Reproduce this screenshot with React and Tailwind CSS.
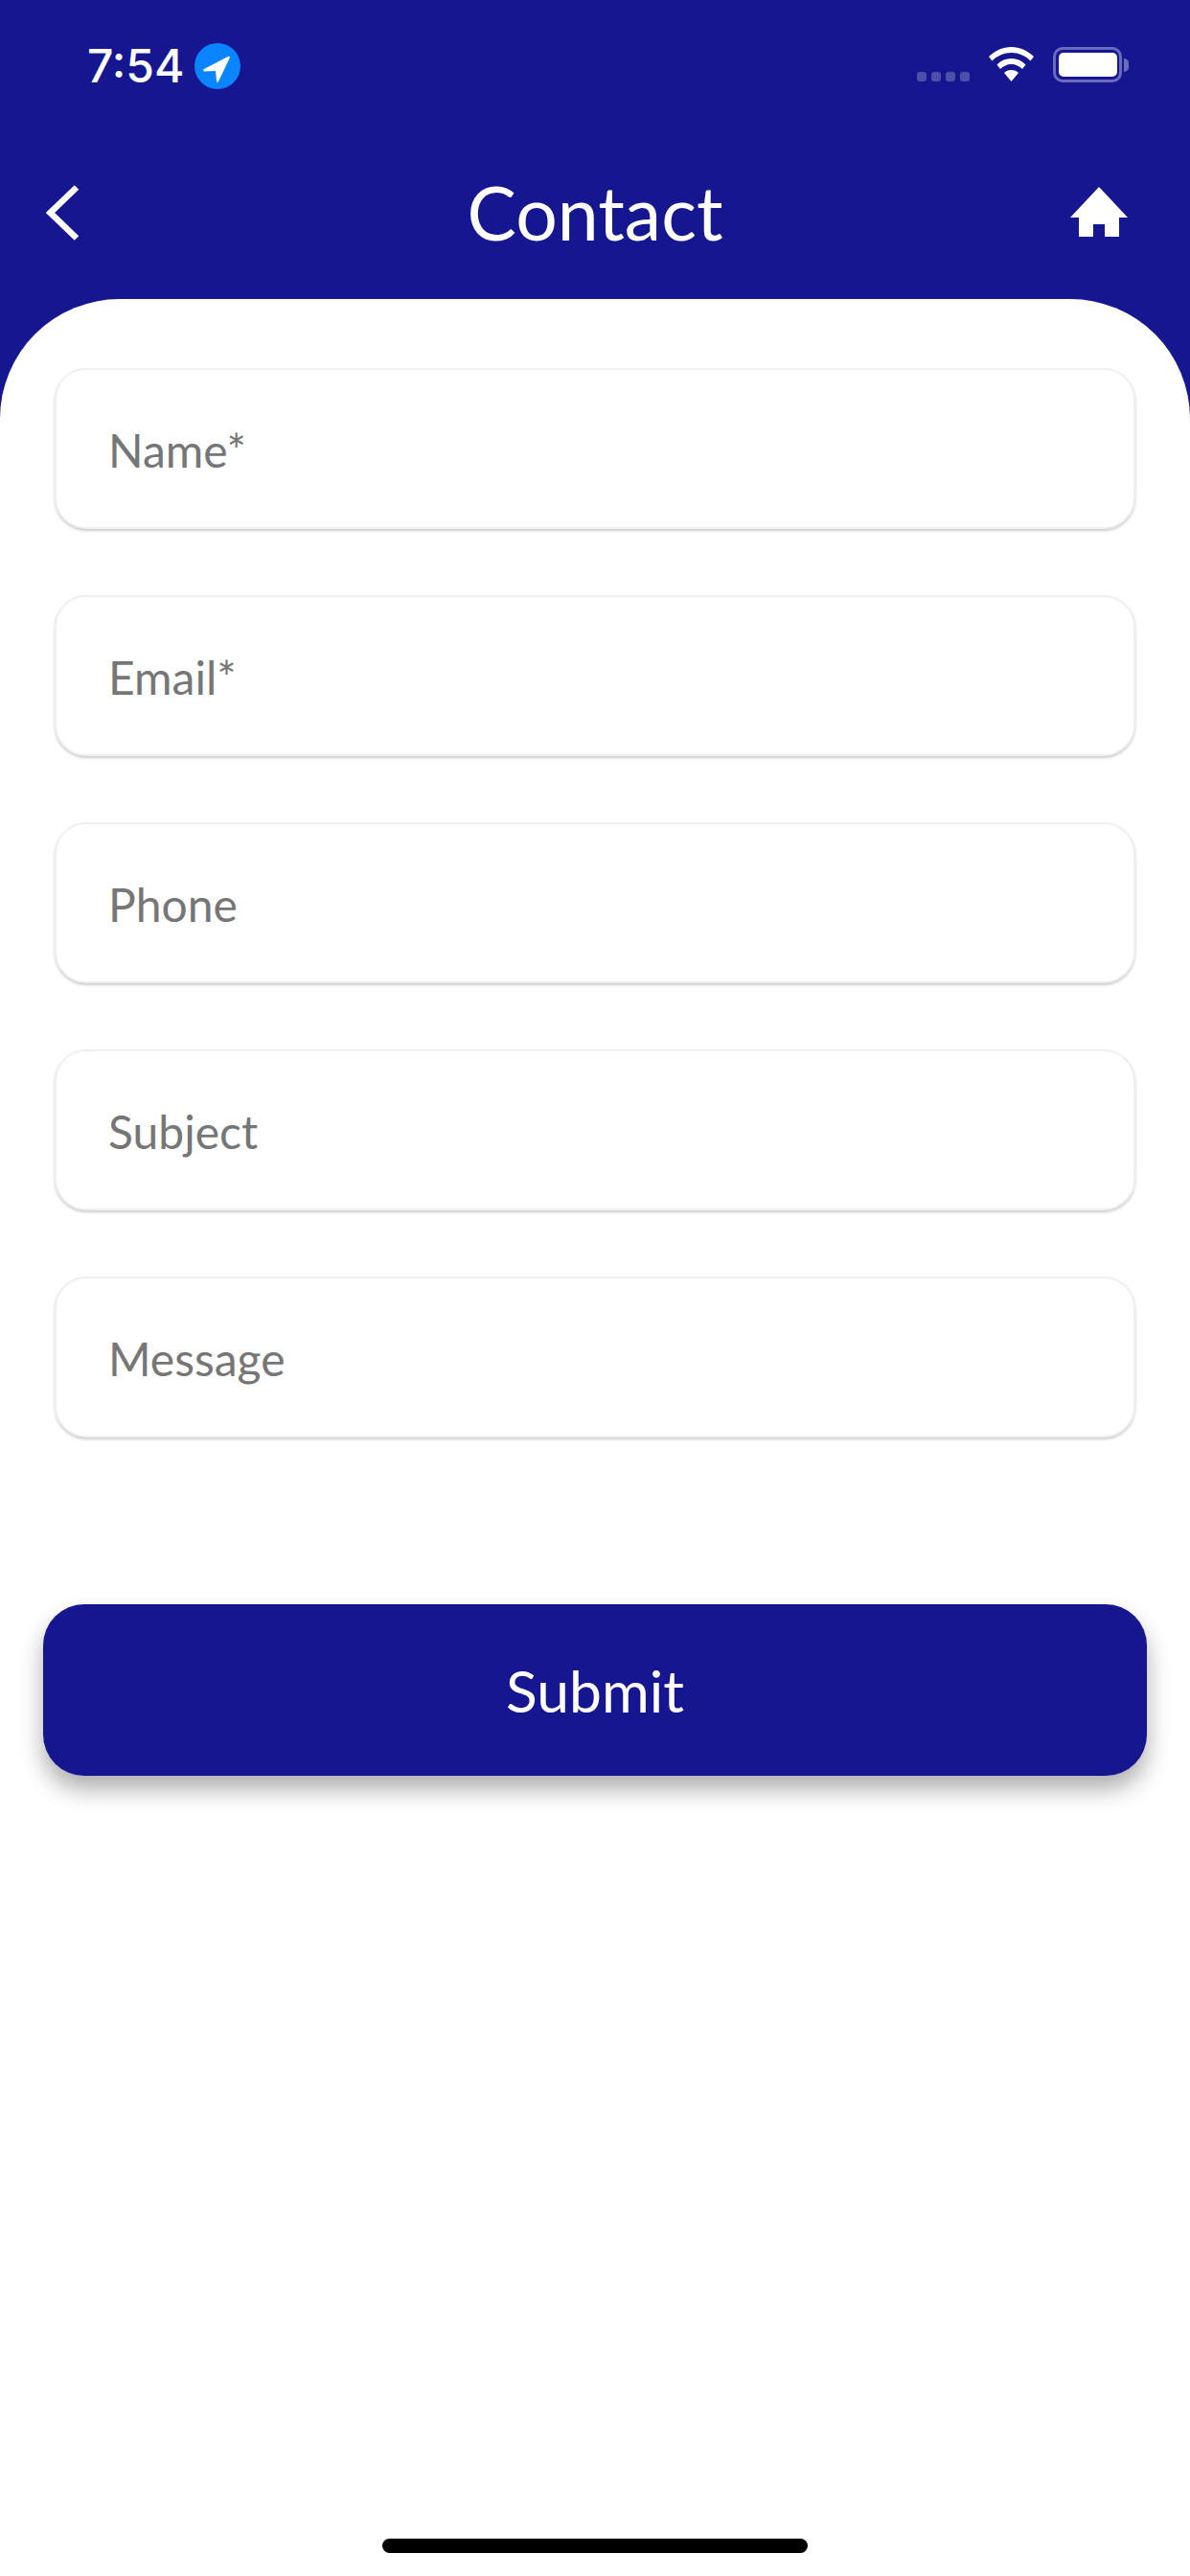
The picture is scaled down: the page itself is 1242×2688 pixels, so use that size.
import React from 'react';

const fields = ['Name*', 'Email*', 'Phone', 'Subject', 'Message'];

function StatusBar() {
  return (
    <div className="flex h-[138px] justify-between pl-[91px] pr-[64px] pt-[44px]">
      <div className="flex h-[49px] items-center">
        <span className="font-['Inter',sans-serif] text-[48px] font-medium leading-none text-white">7:54</span>
        <span className="ml-[10px] flex h-[48px] w-[48px] items-center justify-center rounded-full bg-[#0a84ff]">
          <svg viewBox="0 0 48 48" className="h-[48px] w-[48px]">
            <path d="M10 27 L35 14 Q37.5 13 36.5 16 L25 40 Q23.5 42 23 39.5 L22 29 L10.5 29.5 Q8 29 10 27 Z" fill="#fff" />
          </svg>
        </span>
      </div>
      <div className="flex items-start pt-[5px]">
        <div className="mr-[20px] mt-[26px] flex gap-[5px]">
          <span className="h-[10px] w-[10px] rounded-[3px] bg-[#4e4fa9]" />
          <span className="h-[10px] w-[10px] rounded-[3px] bg-[#4e4fa9]" />
          <span className="h-[10px] w-[10px] rounded-[3px] bg-[#4e4fa9]" />
          <span className="h-[10px] w-[10px] rounded-[3px] bg-[#4e4fa9]" />
        </div>
        <svg viewBox="0 0 47 36" className="h-[36px] w-[47px]">
          <path d="M23.5 0 C32 0 40 3.5 47 10 L43.5 14.5 C38 9 31 6 23.5 6 C16 6 9 9 3.5 14.5 L0 10 C7 3.5 15 0 23.5 0 Z" fill="#fff" />
          <path d="M23.5 12 C29 12 34 14 38.5 18.5 L35 23 C32 20 28 18 23.5 18 C19 18 15 20 12 23 L8.5 18.5 C13 14 18 12 23.5 12 Z" fill="#fff" />
          <path d="M23.5 24 C26.5 24 29 25 31 27 L23.5 36 L16 27 C18 25 20.5 24 23.5 24 Z" fill="#fff" />
        </svg>
        <div className="ml-[20px] flex items-center">
          <div className="flex h-[37px] w-[72px] items-center justify-center rounded-[10px] border-[3px] border-[#6a6bbd]">
            <div className="h-[25px] w-[61px] rounded-[5px] bg-white" />
          </div>
          <div className="ml-[2px] h-[14px] w-[5px] rounded-r-full bg-[#6a6bbd]" />
        </div>
      </div>
    </div>
  );
}

function NavBar() {
  return (
    <div className="flex h-[174px] items-center px-[48px] pb-[8px]">
      <div className="flex-1">
        <svg viewBox="0 0 35 58" className="mt-[2px] block h-[58px] w-[35px]">
          <path d="M32 2.5 L4.5 29 L32 55.5" fill="none" stroke="#fff" strokeWidth="6.5" />
        </svg>
      </div>
      <h1 className="font-['Lato',sans-serif] text-[77px] font-normal leading-none text-white">Contact</h1>
      <div className="flex flex-1 justify-end">
        <svg viewBox="0 0 60 52" className="mr-[17px] h-[52px] w-[60px]">
          <path d="M30 0 L60 32 L51 32 L51 52 L36 52 L36 39 L24 39 L24 52 L9 52 L9 32 L0 32 Z" fill="#fff" />
        </svg>
      </div>
    </div>
  );
}

export default function App() {
  return (
    <div className="flex min-h-[2688px] flex-col bg-[#161691]">
      <StatusBar />
      <NavBar />
      <div className="flex flex-1 flex-col rounded-t-[125px] bg-white pt-[72px]">
        <div className="flex flex-col gap-[69px] px-[57px]">
          {fields.map((field) => (
            <div
              key={field}
              className="flex h-[168px] items-center rounded-[33px] border-2 border-[#f0f0f0] bg-white pl-[54px] shadow-[0_2px_3px_rgba(0,0,0,0.2)]"
            >
              <span className="mt-[4px] font-['Lato',sans-serif] text-[48px] leading-none text-[#767676]">{field}</span>
            </div>
          ))}
        </div>
        <div className="mt-[174px] px-[45px]">
          <button className="flex h-[179px] w-full items-center justify-center rounded-[43px] bg-[#161691] shadow-[0_14px_24px_rgba(0,0,0,0.32)]">
            <span className="mt-[2px] font-['Lato',sans-serif] text-[60.5px] leading-none text-white">Submit</span>
          </button>
        </div>
        <div className="mt-auto flex justify-center pb-[24px]">
          <div className="h-[15px] w-[444px] rounded-full bg-black" />
        </div>
      </div>
    </div>
  );
}
